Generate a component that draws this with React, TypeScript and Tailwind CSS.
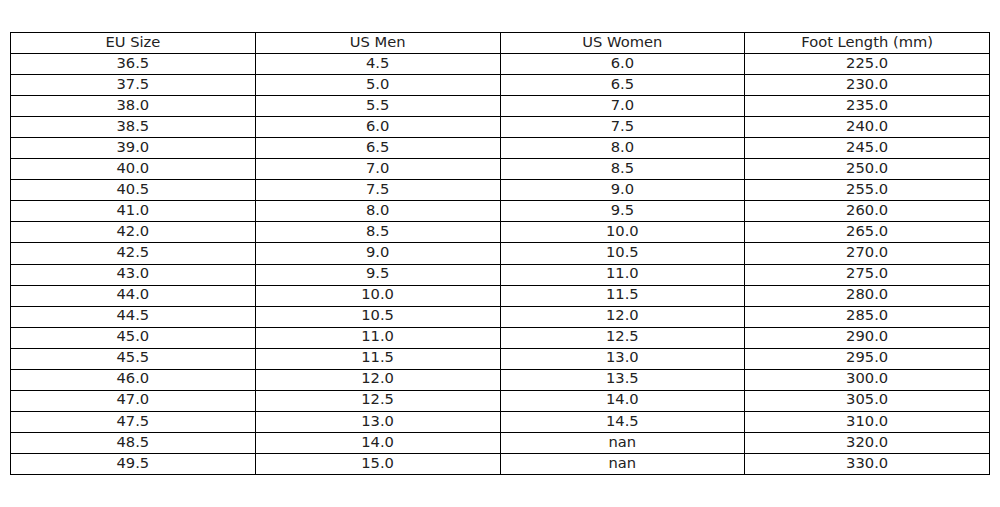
import React from "react";

const rows: string[][] = [
  ["36.5", "4.5", "6.0", "225.0"],
  ["37.5", "5.0", "6.5", "230.0"],
  ["38.0", "5.5", "7.0", "235.0"],
  ["38.5", "6.0", "7.5", "240.0"],
  ["39.0", "6.5", "8.0", "245.0"],
  ["40.0", "7.0", "8.5", "250.0"],
  ["40.5", "7.5", "9.0", "255.0"],
  ["41.0", "8.0", "9.5", "260.0"],
  ["42.0", "8.5", "10.0", "265.0"],
  ["42.5", "9.0", "10.5", "270.0"],
  ["43.0", "9.5", "11.0", "275.0"],
  ["44.0", "10.0", "11.5", "280.0"],
  ["44.5", "10.5", "12.0", "285.0"],
  ["45.0", "11.0", "12.5", "290.0"],
  ["45.5", "11.5", "13.0", "295.0"],
  ["46.0", "12.0", "13.5", "300.0"],
  ["47.0", "12.5", "14.0", "305.0"],
  ["47.5", "13.0", "14.5", "310.0"],
  ["48.5", "14.0", "nan", "320.0"],
  ["49.5", "15.0", "nan", "330.0"],
];

const header = ["EU Size", "US Men", "US Women", "Foot Length (mm)"];

export default function App() {
  const all = [header, ...rows];
  return (
    <div className="w-[1000px] h-[507px] bg-white pt-[32px] pl-[10px]" style={{ fontFamily: '"DejaVu Sans", sans-serif' }}>
      <div className="w-[980px] h-[443px] grid grid-cols-4 grid-rows-[repeat(21,1fr)] border-l border-t border-black text-[14.7px] text-[#222]">
        {all.map((r, i) =>
          r.map((c, j) => (
            <div key={`${i}-${j}`} className="border-r border-b border-black flex items-center justify-center leading-none pb-[2px]">
              {c}
            </div>
          ))
        )}
      </div>
    </div>
  );
}
